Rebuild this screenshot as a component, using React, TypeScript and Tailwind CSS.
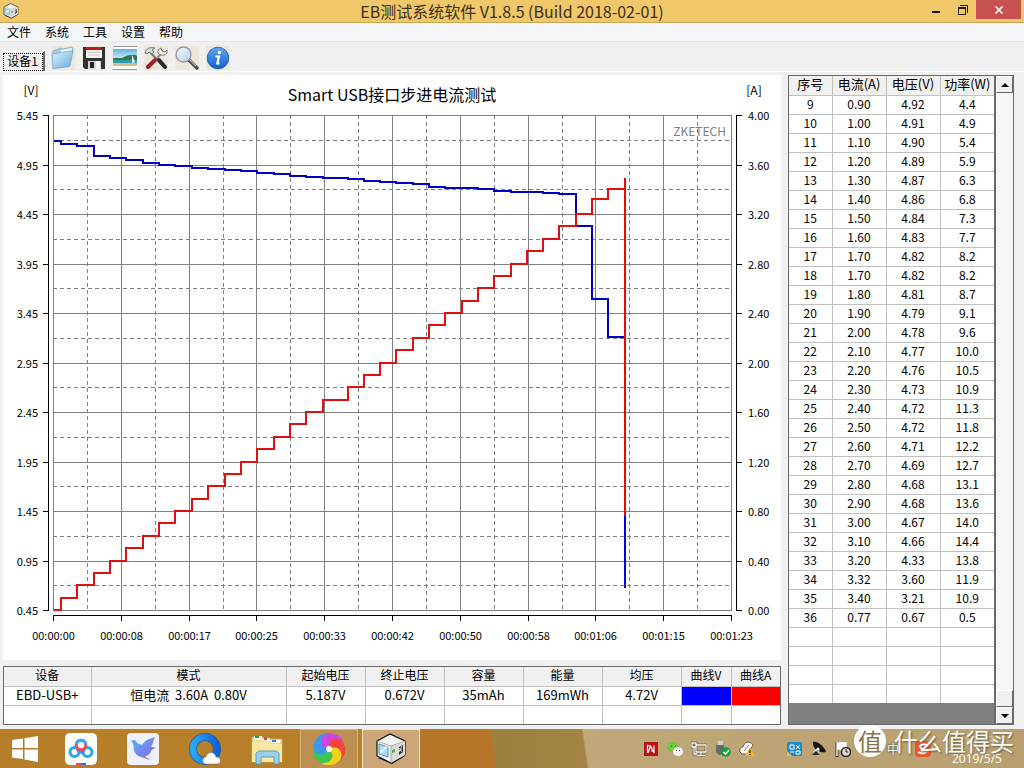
import React, { useState } from 'react';

const menus = ['文件', '系统', '工具', '设置', '帮助'];

const rows = [
  [9, '0.90', '4.92', '4.4'],
  [10, '1.00', '4.91', '4.9'],
  [11, '1.10', '4.90', '5.4'],
  [12, '1.20', '4.89', '5.9'],
  [13, '1.30', '4.87', '6.3'],
  [14, '1.40', '4.86', '6.8'],
  [15, '1.50', '4.84', '7.3'],
  [16, '1.60', '4.83', '7.7'],
  [17, '1.70', '4.82', '8.2'],
  [18, '1.70', '4.82', '8.2'],
  [19, '1.80', '4.81', '8.7'],
  [20, '1.90', '4.79', '9.1'],
  [21, '2.00', '4.78', '9.6'],
  [22, '2.10', '4.77', '10.0'],
  [23, '2.20', '4.76', '10.5'],
  [24, '2.30', '4.73', '10.9'],
  [25, '2.40', '4.72', '11.3'],
  [26, '2.50', '4.72', '11.8'],
  [27, '2.60', '4.71', '12.2'],
  [28, '2.70', '4.69', '12.7'],
  [29, '2.80', '4.68', '13.1'],
  [30, '2.90', '4.68', '13.6'],
  [31, '3.00', '4.67', '14.0'],
  [32, '3.10', '4.66', '14.4'],
  [33, '3.20', '4.33', '13.8'],
  [34, '3.32', '3.60', '11.9'],
  [35, '3.40', '3.21', '10.9'],
  [36, '0.77', '0.67', '0.5'],
];

const emptyRows = [1, 2, 3, 4];

const summary = [
  { name: '设备', value: 'EBD-USB+', width: 'w-[87px]' },
  { name: '模式', value: '恒电流  3.60A  0.80V', width: '' },
  { name: '起始电压', value: '5.187V', width: 'w-[79px]' },
  { name: '终止电压', value: '0.672V', width: 'w-[79px]' },
  { name: '容量', value: '35mAh', width: 'w-[79px]' },
  { name: '能量', value: '169mWh', width: 'w-[79px]' },
  { name: '均压', value: '4.72V', width: 'w-[79px]' },
  { name: '曲线V', value: '', width: 'w-[50px]', color: 'bg-[#0000ff]' },
  { name: '曲线A', value: '', width: 'w-[49px]', color: 'bg-[#ff0000]' },
];

const times = [
  '00:00:00', '00:00:08', '00:00:17', '00:00:25', '00:00:33', '00:00:42',
  '00:00:50', '00:00:58', '00:01:06', '00:01:15', '00:01:23',
];

// Plot area inside the 778x585 chart
const LEFT = 50.5;
const TOP = 40.5;
const WIDTH = 678;
const HEIGHT = 495;
const DIVS = 10;

const yVolt = (v: number) => Math.round(TOP + ((5.45 - v) / 5) * HEIGHT);
const yAmp = (a: number) => Math.floor(TOP + ((4 - a) / 4) * HEIGHT);

const firstVolts = [5.19, 5.16, 5.14, 5.04, 5.02, 5.0, 4.97, 4.95, 4.94];
const firstAmps = [0, 0.1, 0.2, 0.3, 0.4, 0.5, 0.6, 0.7, 0.8];
const volts = [...firstVolts, ...rows.map((r) => Number(r[2]))];
const amps = [...firstAmps, ...rows.map((r) => Number(r[1]))];

// Step 18 repeats step 17 for about half a period
const stepX = (i: number) => {
  if (i === 0) return LEFT;
  if (i <= 17) return Math.round(58 + 16.35 * (i - 1));
  if (i === 18) return 332;
  return Math.floor(345 + 16.3 * (i - 19));
};

const stepPath = (values: number[], scale: (v: number) => number) => {
  let d = `M${LEFT} ${scale(values[0])}`;
  for (let i = 1; i < values.length - 1; i++) {
    d += `H${stepX(i)}V${scale(values[i])}`;
  }
  return d + 'H622';
};

const Chart = () => {
  const divs = Array.from({ length: DIVS + 1 }, (_, i) => i);
  const halves = divs.slice(0, DIVS);
  const gx = (i: number) => Math.floor(LEFT + (i * WIDTH) / DIVS) + 0.5;
  const gy = (i: number) => Math.floor(TOP + (i * HEIGHT) / DIVS) + 0.5;

  return (
    <svg viewBox="0 0 778 585" className="block w-full bg-white" role="img" aria-label="Smart USB接口步进电流测试">
      <g stroke="#808080" fill="none" shapeRendering="crispEdges">
        {divs.map((i) => (
          <g key={i}>
            <line x1={gx(i)} x2={gx(i)} y1="40" y2="536" />
            <line x1="50" x2="729" y1={gy(i)} y2={gy(i)} />
          </g>
        ))}
        {halves.map((i) => (
          <g key={i} strokeDasharray="4 3">
            <line x1={gx(i + 0.5)} x2={gx(i + 0.5)} y1="40" y2="536" />
            <line x1="50" x2="729" y1={gy(i + 0.5)} y2={gy(i + 0.5)} />
          </g>
        ))}
      </g>

      {/* Axes */}
      <g stroke="#000" shapeRendering="crispEdges">
        <line x1="45.5" x2="45.5" y1="40" y2="536" />
        <line x1="733.5" x2="733.5" y1="40" y2="536" />
        <line x1="50" x2="729" y1="540.5" y2="540.5" />
        {divs.map((i) => (
          <g key={i}>
            <line x1="40" x2="45" y1={gy(i)} y2={gy(i)} />
            <line x1="734" x2="739" y1={gy(i)} y2={gy(i)} />
            <line x1={gx(i)} x2={gx(i)} y1="541" y2="546" />
          </g>
        ))}
      </g>

      <g fontSize="11" fill="#000">
        {divs.map((i) => (
          <g key={i}>
            <text x="35" y={gy(i) + 4} textAnchor="end">{(5.45 - i * 0.5).toFixed(2)}</text>
            <text x="745" y={gy(i) + 4}>{(4 - i * 0.4).toFixed(2)}</text>
            <text x={gx(i)} y="565" textAnchor="middle">{times[i]}</text>
          </g>
        ))}
      </g>
      <g fontSize="12">
        <text x="28" y="20" textAnchor="middle">[V]</text>
        <text x="751" y="20" textAnchor="middle">[A]</text>
        <text x="723" y="61" fill="#808080" textAnchor="end">ZKETECH</text>
      </g>
      <text x="389" y="26" fontSize="16" textAnchor="middle">Smart USB接口步进电流测试</text>

      <g fill="none" strokeWidth="2" shapeRendering="crispEdges">
        <path d={stepPath(volts, yVolt)} stroke="#0000c8" />
        <path d={stepPath(amps, yAmp)} stroke="#e01010" />
        <path d="M622 103V441" stroke="#e80808" />
        <path d="M622 441V513" stroke="#0000e0" />
      </g>
    </svg>
  );
};

const BoxIcon = ({ className }: { className: string }) => (
  <svg viewBox="0 0 32 32" className={className}>
    <path d="M3 25l14 6 13-8-3-3z" fill="#000" />
    <path d="M2 8L15 1l15 7v14l-14 8L2 23z" fill="#f2f2f2" stroke="#111" strokeWidth="1.2" />
    <path d="M16 13l14-5v14l-14 8z" fill="#dcdcdc" />
    <path d="M2 8l14 5v17M16 13l14-5" fill="none" stroke="#999" strokeWidth=".8" />
    <path d="M4 11l9 3v10l-9-3z" fill="#a8dcf8" stroke="#4a7890" strokeWidth=".8" />
    <path d="M5 18l6-5 2 1-8 7z" fill="#e8f8ff" />
    <path d="M17 17l3-1v3l-3 1z" fill="#3cb832" />
    <path d="M24 14l4-2v7l-4 3z" fill="#333" />
    <path d="M24 15l3 4M27 13l-3 6M24 18l3-2" stroke="#eee" strokeWidth=".8" />
  </svg>
);

const toolIcons = [
  {
    label: '打开',
    icon: (
      <>
        <path d="M2 5l8-3 2 1 9-2 1 2-3 17-16 2z" fill="#a9cde6" stroke="#7da6c4" strokeWidth=".8" />
        <path d="M10 4l11-2-1 5-10 2z" fill="#f4fbff" />
        <path d="M1 8l18-3 3 .5-4 15L2 22.500z" fill="url(#folder)" stroke="#71a7cf" strokeWidth=".8" />
      </>
    ),
  },
  {
    label: '保存',
    icon: (
      <>
        <path d="M1 1h22v22H3l-2-2z" fill="#363232" />
        <path d="M4 1h16v11H4z" fill="#f7f4f4" />
        <path d="M4 1h16v3H4z" fill="#c01820" />
        <path d="M6 6.500h12M6 9h12" stroke="#c9c4c4" />
        <path d="M6 15h13v8H6z" fill="#d5d5d5" />
        <path d="M8 16h4v6H8z" fill="#242222" />
        <path d="M14 15h4v8h-4z" fill="#f7f7f7" />
      </>
    ),
  },
  {
    label: '图片',
    icon: (
      <>
        <path d="M0 0h24v24H0z" fill="#fff" />
        <path d="M0 3h24v10H0z" fill="url(#sky)" />
        <path d="M0 12h24v6H0z" fill="#2e9cab" />
        <path d="M0 13c3-2 5-1 8-1s5-3 9-3 5-1 7 1v4H0z" fill="#38764e" />
        <path d="M0 17h24v3H0z" fill="#d9bd85" />
        <path d="M19 9v8l3-1z" fill="#fff" />
        <path d="M0 .5h24M0 23.500h24" stroke="#999" />
      </>
    ),
  },
  {
    label: '工具',
    icon: (
      <>
        <path d="M5 5l15 16" stroke="#777" strokeWidth="2" />
        <path d="M19 6L8 17" stroke="#888" strokeWidth="2" />
        <path d="M1 7c1-5 5-6 10-5l-3 2 2 2-2 2-3-2-2 2z" fill="#d9dddd" stroke="#686868" strokeWidth=".9" />
        <path d="M15 8c-2-2-1-5 2-6l1 3 3 1 2-2c1 4-3 6-6 5z" fill="#e7eaea" stroke="#686868" strokeWidth=".9" />
        <path d="M11 14L4 21" stroke="#a62028" strokeWidth="4" strokeLinecap="round" />
        <path d="M15 14l6 7" stroke="#2d2a2a" strokeWidth="4" strokeLinecap="round" />
      </>
    ),
  },
  {
    label: '查找',
    icon: (
      <>
        <path d="M14 14l8 8" stroke="#4b4b4b" strokeWidth="3.500" strokeLinecap="round" />
        <path d="M14 13l7 7" stroke="#bdbdbd" strokeWidth="1.200" />
        <circle cx="8.500" cy="8.500" r="7.500" fill="url(#lens)" stroke="#8e99a6" strokeWidth="1.300" />
      </>
    ),
  },
  {
    label: '关于',
    icon: (
      <>
        <circle cx="12" cy="12" r="10.800" fill="url(#info)" stroke="#1658ae" strokeWidth=".8" />
        <circle cx="13.500" cy="6.500" r="1.700" fill="#fff" />
        <path d="M9.500 10.500h3.500l-1.700 7h2.200" fill="none" stroke="#fff" strokeWidth="2.200" />
      </>
    ),
  },
];

const Gradients = () => (
  <svg className="absolute h-0 w-0" aria-hidden="true">
    <defs>
      <linearGradient id="folder" x1="0" y1="0" x2="1" y2="1">
        <stop offset="0" stopColor="#e0f2fd" />
        <stop offset="1" stopColor="#64acdf" />
      </linearGradient>
      <linearGradient id="sky" x1="0" y1="0" x2="0" y2="1">
        <stop offset="0" stopColor="#5cb2e2" />
        <stop offset="1" stopColor="#d6effa" />
      </linearGradient>
      <linearGradient id="lens" x1="0" y1="0" x2="1" y2="1">
        <stop offset="0" stopColor="#f5faff" />
        <stop offset="1" stopColor="#b9cfe9" />
      </linearGradient>
      <linearGradient id="info" x1="0" y1="0" x2="0" y2="1">
        <stop offset="0" stopColor="#68a9ed" />
        <stop offset="1" stopColor="#0b5fcf" />
      </linearGradient>
      <linearGradient id="bird" x1="0" y1="0" x2="1" y2="1">
        <stop offset="0" stopColor="#57b4f4" />
        <stop offset="1" stopColor="#8d62e4" />
      </linearGradient>
      <linearGradient id="ring" x1="0" y1="0" x2="1" y2="0">
        <stop offset="0" stopColor="#25a9f5" />
        <stop offset="1" stopColor="#1462d8" />
      </linearGradient>
    </defs>
  </svg>
);

const petals = ['#c848e0', '#f8443c', '#f8d020', '#3cc850', '#3898f0'];

const taskIcons = [
  {
    label: '百度网盘',
    button: '',
    icon: (
      <svg viewBox="0 0 32 32" className="h-8 w-8">
        <rect width="32" height="32" rx="5" fill="#fff" />
        <g fill="none" strokeWidth="3">
          <circle cx="9.500" cy="19" r="4.500" stroke="#25a5ef" />
          <circle cx="22.500" cy="19" r="4.500" stroke="#25a5ef" />
          <path d="M12 16l4 4M20 16l-4 4" stroke="#2f8cf0" />
          <circle cx="16" cy="12" r="4.800" stroke="#ee4a60" />
          <path d="M11.300 11a4.800 4.800 0 0 1 9.400 0" stroke="#2bb4f0" />
        </g>
        <path d="M11 30h5v2h-5z" fill="#ee4a60" />
        <path d="M16 30h5v2h-5z" fill="#2574e8" />
      </svg>
    ),
  },
  {
    label: '迅雷',
    button: '',
    icon: (
      <svg viewBox="0 0 32 32" className="h-8 w-8">
        <rect width="32" height="32" rx="4" fill="#eef0fc" />
        <path d="M4 8c3-2 5-1 6 2l5 2c3-5 7-6 13-8-2 4-2 7-4 10l5 .5-5 3c0 3-3 5-6 6l6 4-8-3c-3-1-6-1-8-5-2-3-1-7-2-9z" fill="url(#bird)" />
      </svg>
    ),
  },
  {
    label: 'QQ浏览器',
    button: '',
    icon: (
      <svg viewBox="0 0 32 32" className="h-8 w-8">
        <circle cx="16" cy="16" r="12" fill="none" stroke="#255a86" strokeWidth="8" />
        <circle cx="16" cy="16" r="12" fill="none" stroke="url(#ring)" strokeWidth="6.500" />
        <path d="M17 31c-5-1-4-7 0-7 1-6 9-6 10 0 6 0 6 7 1 7z" fill="#fff" stroke="#667" strokeWidth=".5" />
      </svg>
    ),
  },
  {
    label: '资源管理器',
    button: '',
    icon: (
      <svg viewBox="0 0 32 32" className="h-8 w-8">
        <path d="M1 4h11l1 2h18v23H1z" fill="#f2dc8c" stroke="#c8a850" strokeWidth=".8" />
        <path d="M3 3h8v4H3z" fill="#fff" />
        <path d="M4 3h4v2H4z" fill="#28a030" />
        <path d="M12 5h7v3h-7z" fill="#fff" />
        <path d="M13 5h3v2h-3z" fill="#d84030" />
        <path d="M20 7h9v3h-9z" fill="#fff" />
        <path d="M21 7h4v2h-4z" fill="#2888c8" />
        <path d="M1 9h18l1 2h11v18H1z" fill="#f8e8a4" />
        <path d="M5 31V20l3-2h17l3 2v11h-5v-7H10v7z" fill="#9bd0e8" stroke="#4a98c0" strokeWidth=".9" />
      </svg>
    ),
  },
  {
    label: '浏览器',
    button: 'border border-[#d9b67d] bg-[#bd8f50]',
    icon: (
      <svg viewBox="-16 -16 32 32" className="h-8 w-8">
        {petals.map((color, i) => (
          <path key={color} d="M0 0C-10-1-11-12-2-15.500 6-17 12-13 14.500-7 9-11 3-8 0 0z" fill={color} transform={`rotate(${i * 72})`} />
        ))}
        {/* The first petal's leading half goes over the last one */}
        <path d="M0 0C-10-1-11-12-2-15.500L0-15.500z" fill={petals[0]} />
        <circle r="3" fill="#fff" />
      </svg>
    ),
  },
  {
    label: 'EB测试系统软件',
    button: 'border border-[#f5e6cc] bg-[#cda678]',
    icon: <BoxIcon className="h-8 w-8" />,
  },
];

const trayIcons = [
  {
    label: 'Adobe',
    icon: (
      <>
        <path d="M1 1h14v14H1z" fill="#b81418" />
        <path d="M4.500 12V4.500l3 .5 3.500 7V4.500M7.500 5L5 12M8 10h2" stroke="#fff" strokeWidth="1.200" fill="none" />
      </>
    ),
  },
  {
    label: '微信',
    icon: (
      <>
        <ellipse cx="6" cy="6" rx="6" ry="5" fill="#72c83c" />
        <ellipse cx="11" cy="10.500" rx="5" ry="4.500" fill="#f4f4f4" />
        <path d="M4 5h1M8 5h1M9 9.500h1M12 9.500h1" stroke="#555" />
      </>
    ),
  },
  {
    label: '网络',
    icon: (
      <>
        <path d="M5 4h10v7H5zM10 11v3M6 14.500h8M1 2h4v4H1zM3 6v7h3" fill="none" stroke="#443a28" strokeWidth="2.500" />
        <path d="M5 4h10v7H5zM10 11v3M6 14.500h8M1 2h4v4H1zM3 6v7h3" fill="none" stroke="#fff" strokeWidth="1.300" />
      </>
    ),
  },
  {
    label: 'USB',
    icon: (
      <>
        <path d="M3 0h5v4H3z" fill="#d0d0d0" />
        <path d="M1 4h8v7l-3 3H4l-3-3z" fill="#68696a" />
        <circle cx="11" cy="11" r="4.800" fill="#18a038" />
        <path d="M8.500 11l2 2 3.500-4" stroke="#fff" strokeWidth="1.500" fill="none" />
      </>
    ),
  },
  {
    label: '云盘',
    icon: (
      <>
        <path d="M1 11c-1-3 1-5 3-5 1-5 7-7 10-2l-5 9H3z" fill="#f8f8f8" stroke="#625c50" />
        <path d="M5 10l5-6" stroke="#888" />
        <path d="M11 6l5 9H6z" fill="#f6b820" />
        <path d="M11 9v3M11 13v1" stroke="#222" strokeWidth="1.300" />
      </>
    ),
  },
  { label: '', icon: null },
  {
    label: '系统',
    icon: (
      <>
        <rect x="0" y="1" width="15" height="14" rx="2" fill="#2089c8" />
        <path d="M3 4h4v4H3zM9 4l4 4M13 4L9 8M3 11h4M9 10h4v3H9z" stroke="#fff" fill="none" />
        <path d="M0 10l5 5H0z" fill="#e8c838" />
      </>
    ),
  },
  {
    label: '卫星',
    icon: (
      <>
        <path d="M2 1c4-1 11 4 13 10-5 2-14-3-13-10z" fill="#141414" />
        <path d="M7 8l-5 3M6 8l-3 6M8 9l-1 6" stroke="#ddd" />
        <circle cx="7" cy="8" r="1.500" fill="#eee" />
        <path d="M1 14h8l-4-4z" fill="#262626" />
      </>
    ),
  },
  {
    label: '操作中心',
    icon: (
      <>
        <path d="M2 16V1" stroke="#333" strokeWidth="3" />
        <path d="M2 15V1M2 2h9v6H2" stroke="#fff" strokeWidth="1.300" fill="#fff" />
        <circle cx="11" cy="11" r="4.500" fill="#ddd" stroke="#222" strokeWidth="1.500" />
        <path d="M11 8v3h2" stroke="#222" fill="none" />
      </>
    ),
  },
];

const cell = 'h-[19px] border border-[#c0c0c0] p-0 pb-[2px] text-center leading-4 font-normal';

const App = () => {
  const [curves, setCurves] = useState(true);

  return (
    <div className="relative flex min-h-screen flex-col bg-[#f0f0f0] font-['Noto_Sans_CJK_SC','Noto_Sans',sans-serif] text-[13px] text-black">
      <Gradients />

      {/* Title bar */}
      <header className="relative flex h-[23px] items-center justify-between border-b border-[#c9a555] bg-[#f0c869]">
        <BoxIcon className="ml-[3px] h-4 w-4" />
        <h1 className="absolute inset-x-0 top-0 text-center text-[16px] leading-[22px] text-[#3c3018]">
          EB测试系统软件 V1.8.5 (Build 2018-02-01)
        </h1>
        <div className="relative flex self-start">
          <button aria-label="最小化" className="flex h-[19px] w-[26px] items-center justify-center">
            <svg viewBox="0 0 12 12" className="h-3 w-3"><path d="M1 8h8" stroke="#221c10" strokeWidth="2" /></svg>
          </button>
          <button aria-label="还原" className="flex h-[19px] w-[26px] items-center justify-center">
            <svg viewBox="0 0 12 12" className="h-3 w-3" shapeRendering="crispEdges">
              <path d="M1.500 3.500h7v7h-7zM3 1.500h7.500V9M1 4.500h8" fill="none" stroke="#221c10" />
            </svg>
          </button>
          <button aria-label="关闭" className="mr-[3px] flex h-[19px] w-[45px] items-center justify-center bg-[#c75050]">
            <svg viewBox="0 0 10 10" className="h-[10px] w-[10px]"><path d="M1.500 1.500l7 7M8.500 1.500l-7 7" stroke="#fff" strokeWidth="1.700" /></svg>
          </button>
        </div>
      </header>

      {/* Menu bar */}
      <nav className="flex h-[19px] items-center border-b border-[#e6e6e6] bg-[#f5f6f7] text-[12px] leading-[18px]">
        {menus.map((menu) => (
          <button key={menu} className="w-[38px] text-center">{menu}</button>
        ))}
      </nav>

      {/* Toolbar */}
      <div className="flex h-[30px] items-end border-b border-white pl-[2px]">
        <button className="flex h-5 w-[43px] items-center justify-center border-t border-r-2 border-t-white border-r-[#696969] text-[12px]">
          <span className="w-10 border border-dotted border-black pb-[2px] leading-[14px]">设备1</span>
        </button>
        <div className="flex gap-[7px] pb-px pl-[6px]">
          {toolIcons.map((tool) => (
            <button key={tool.label} aria-label={tool.label} className="bg-[#ece7d9]">
              <svg viewBox="0 0 24 24" className="block h-6 w-6">{tool.icon}</svg>
            </button>
          ))}
        </div>
      </div>

      <main className="grid grid-cols-[minmax(0,1fr)_226px] gap-[7px] pt-[3px] pr-[10px] pb-1 pl-[3px]">
        <section className="flex flex-col gap-[6px]">
          <Chart />

          <div className="border border-[#696969] bg-white">
            <table className="w-full table-fixed border-collapse border-hidden">
              <thead>
                <tr className="bg-[#f0f0f0]">
                  {summary.map((col) => (
                    <th key={col.name} className={`${cell} ${col.width} text-[12px]`}>{col.name}</th>
                  ))}
                </tr>
              </thead>
              <tbody>
                <tr>
                  {summary.map((col) =>
                    col.color ? (
                      <td key={col.name} className={`h-[19px] border border-[#c0c0c0] p-0 ${col.color}`}>
                        <button aria-label={col.name} onClick={() => setCurves(!curves)} className="block h-4 w-full" />
                      </td>
                    ) : (
                      <td key={col.name} className={`${cell} whitespace-pre`}>{col.value}</td>
                    )
                  )}
                </tr>
                <tr>
                  {summary.map((col) => (
                    <td key={col.name} className={cell}></td>
                  ))}
                </tr>
              </tbody>
            </table>
          </div>
        </section>

        {/* Step list */}
        <section className="flex border border-[#696969] bg-[#808080]">
          <div className="flex-1">
            <table className="w-full table-fixed border-collapse border-hidden bg-white">
              <thead>
                <tr className="bg-[#f0f0f0]">
                  <th className={`${cell} w-[43px]`}>序号</th>
                  <th className={cell}>电流(A)</th>
                  <th className={cell}>电压(V)</th>
                  <th className={cell}>功率(W)</th>
                </tr>
              </thead>
              <tbody className="text-[12px]">
                {rows.map(([id, current, voltage, power]) => (
                  <tr key={id}>
                    <td className={cell}>{id}</td>
                    <td className={cell}>{current}</td>
                    <td className={cell}>{voltage}</td>
                    <td className={cell}>{power}</td>
                  </tr>
                ))}
                {emptyRows.map((n) => (
                  <tr key={n}>
                    <td className={cell}></td>
                    <td className={cell}></td>
                    <td className={cell}></td>
                    <td className={cell}></td>
                  </tr>
                ))}
              </tbody>
            </table>
          </div>
          <div className="flex w-[19px] flex-col border-l-2 border-[#696969] bg-[#f6f6f6]">
            <button aria-label="向上" className="flex h-[17px] items-center justify-center border border-t-white border-r-[#696969] border-b-[#696969] border-l-white bg-[#f0f0f0]">
              <svg viewBox="0 0 8 4" className="h-1 w-2"><path d="M0 4l4-4 4 4z" /></svg>
            </button>
            <div className="flex flex-1 items-end">
              <div className="h-[17px] w-full border border-t-white border-r-[#696969] border-b-[#696969] border-l-white bg-[#f0f0f0]"></div>
            </div>
            <button aria-label="向下" className="flex h-[17px] items-center justify-center border border-t-white border-r-[#696969] border-b-[#696969] border-l-white bg-[#f0f0f0]">
              <svg viewBox="0 0 8 4" className="h-1 w-2"><path d="M0 0l4 4 4-4z" /></svg>
            </button>
          </div>
        </section>
      </main>

      {/* Taskbar */}
      <footer className="relative flex h-10 items-center justify-between bg-[linear-gradient(82deg,#b67e28_0%,#b9802b_38%,#b4752a_41%,#b87528_48%,#9c8040_48.200%,#a38445_57%,#c0a878_57.200%,#b99f70_100%)]">
        <div className="flex h-full">
          <button aria-label="开始" className="flex w-[50px] items-center justify-center">
            <svg viewBox="0 0 26 26" className="h-[26px] w-[26px]" fill="#fff">
              <path d="M0 4l11-1.500V12H0zM12.500 2.300L26 0v12H12.500zM0 13.500h11V23L0 21.500zM12.500 13.500H26V26l-13.500-2.500z" />
            </svg>
          </button>
          {taskIcons.map((task) => (
            <div key={task.label} className="w-[62px] px-[2px]">
              <button aria-label={task.label} className={`flex h-full w-full items-center justify-center ${task.button}`}>{task.icon}</button>
            </div>
          ))}
        </div>
        <div className="flex items-center">
          {trayIcons.map((tray, i) => (
            <div key={i} className="flex w-6 justify-center">
              {tray.icon && (
                <button aria-label={tray.label}>
                  <svg viewBox="0 0 16 16" className="block h-4 w-4">{tray.icon}</svg>
                </button>
              )}
            </div>
          ))}
          <div className="flex w-[84px] items-center justify-end gap-4 pr-[8px]">
            <span className="text-[12px] text-white [text-shadow:0_0_2px_#000]">中</span>
            <svg viewBox="0 0 16 16" className="h-4 w-4">
              <rect width="16" height="16" rx="4" fill="#ee5428" />
              <path d="M12 4C7 2 3 5 6 7s7 2 5 4-6 1-8 0" fill="none" stroke="#fff" strokeWidth="2" />
            </svg>
          </div>
          <div className="w-[85px] pl-[13px] font-['Open_Sans',sans-serif] text-[12px] text-white">
            <div className="pl-3 leading-5 opacity-40">12:33</div>
            <div className="leading-4">2019/5/5</div>
          </div>
        </div>
        <div className="absolute -top-[4px] right-[10px] flex items-center gap-2 text-white [text-shadow:1px_1px_2px_#6a5838]">
          <span className="flex h-8 w-8 items-center justify-center rounded-full bg-white text-[24px] leading-8 text-[#8a7148] [text-shadow:none]">值</span>
          <span className="text-[24px] leading-8">什么值得买</span>
        </div>
      </footer>
    </div>
  );
};

export default App;
